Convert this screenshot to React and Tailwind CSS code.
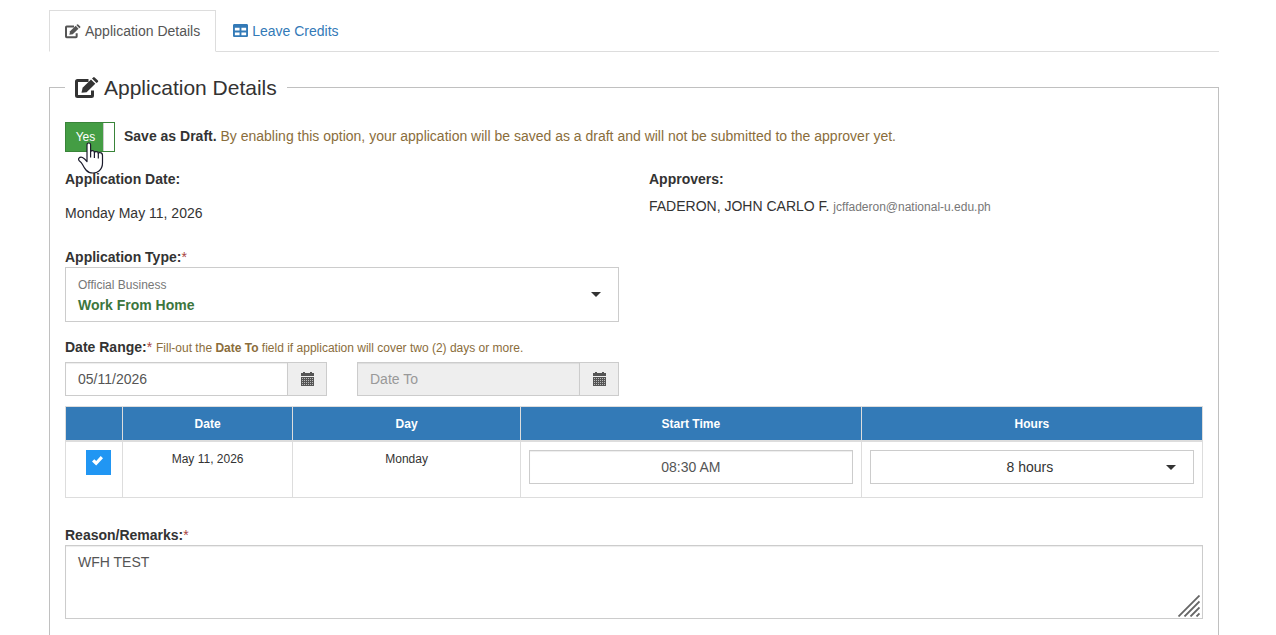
import { useState } from 'react';
import { FaTable } from 'react-icons/fa';

const rows = [{ id: 1, date: 'May 11, 2026', day: 'Monday', start: '08:30 AM', hours: '8' }];

const EditIcon = ({ className }) => (
  <svg viewBox="0 0 24 22" fill="none" className={className} aria-hidden="true">
    <path
      d="M13.500 3.500H2.500Q1.500 3.500 1.500 4.500V18.500Q1.500 19.500 2.500 19.500H16.500Q17.500 19.500 17.500 18.500V13.500"
      stroke="currentColor"
      strokeWidth="3"
    />
    <path d="M6.500 15.800L7.600 10.800L16 2.400L20.300 6.700L11.600 15.200Z" fill="currentColor" />
    <path d="M17 1.400L18.200 0.400Q18.900 -0.200 19.700 0.500L22.900 3.600Q23.500 4.300 22.900 5L21.500 6Z" fill="currentColor" />
  </svg>
);

const CalendarIcon = () => (
  <svg width="13" height="14" viewBox="0 0 13 14" shapeRendering="crispEdges" aria-hidden="true">
    <path d="M2 0h2v1h5V0h2v1h2v3H0V1h2zM0 5h13v9H0z" fill="#555" />
    <path
      d="M1 6.500h11M1 8.500h11M1 10.500h11M1 12.500h11"
      stroke="#bbb"
      strokeWidth="1"
      strokeDasharray="1 1"
    />
  </svg>
);

const Caret = () => (
  <svg width="10" height="5" viewBox="0 0 10 5" fill="#333" aria-hidden="true">
    <path d="M0 0h10L5 5z" />
  </svg>
);

const HandCursor = () => (
  <svg width="26" height="32" viewBox="0 0 26 32" aria-hidden="true">
    <path
      d="M9 19V2.800Q9 1 10.800 1Q12.600 1 12.600 2.800V9.500Q13 8.500 14.600 8.700Q16.300 9 16.400 10.300Q17 9.400 18.500 9.700Q20.200 10 20.300 11.200Q21 10.400 22.300 10.700Q24.500 11 24.500 13.500V21Q24.500 26 21 29Q18.800 31 15 31Q10.500 31 8 28Q6 25.500 4.500 22.500Q3.500 20.500 1.500 19Q0 17.500 1 16.200Q2.300 14.600 4.500 15.500Q6.500 16.500 9 19.500Z"
      fill="#fff"
      stroke="#1b1b2b"
      strokeWidth="1.200"
      strokeLinejoin="round"
    />
    <path d="M12.600 9v6.500M16.400 10v6M20.300 11v5.500" stroke="#1b1b2b" strokeWidth="1.200" fill="none" />
  </svg>
);

const DateField = ({ id, label, ...props }) => (
  <div className="flex h-[34px] border border-[#ccc]">
    <input
      id={id}
      type="text"
      aria-label={label}
      className="min-w-0 flex-1 px-3 text-[#555] placeholder-[#999] shadow-[inset_0_1px_1px_rgba(0,0,0,0.075)] outline-none disabled:bg-[#eee]"
      {...props}
    />
    <button
      type="button"
      aria-label={`Open calendar for ${label}`}
      className="flex w-[39px] items-center justify-center border-l border-[#ccc] bg-[#eee]"
    >
      <CalendarIcon />
    </button>
  </div>
);

const Required = () => <span className="font-normal text-[#a94442]">*</span>;

export default function App() {
  const [draft, setDraft] = useState(true);
  const [type, setType] = useState('Work From Home');
  const [dateFrom, setDateFrom] = useState('05/11/2026');
  const [remarks, setRemarks] = useState('WFH TEST');

  return (
    <div className="bg-white pr-2 font-['Liberation_Sans',Arial,sans-serif] text-sm leading-5 text-[#333]">
      <main className="mx-auto max-w-[1170px] pt-2.5 pb-10">
        <nav className="flex border-b border-[#ddd]">
          <a
            href="#details"
            className="-mb-px flex items-center gap-1 border border-[#ddd] border-b-white bg-white px-[15px] py-2.5 text-[#555]"
          >
            <EditIcon className="h-[15px] w-4" />
            Application Details
          </a>
          <a href="#credits" className="flex items-center gap-1 px-[17px] py-2.5 text-[#337ab7]">
            <FaTable size={15} />
            Leave Credits
          </a>
        </nav>

        <fieldset className="mt-[19px] border border-[#c0c0c0] px-[15px] pb-10">
          <legend className="flex items-center gap-[5px] px-2.5 pt-0.5 text-[21px] leading-[30px]">
            <EditIcon className="h-[22px] w-6" />
            Application Details
          </legend>

          <div className="mt-[19px] flex items-center">
            <label className="relative flex h-[30px] w-[50px] cursor-pointer border border-[#398439] bg-white text-xs text-white">
              <input
                type="checkbox"
                aria-label="Save as Draft"
                checked={draft}
                onChange={(e) => setDraft(e.target.checked)}
                className="sr-only"
              />
              <span className="flex w-[38px] items-center justify-center border-r border-[#ccc] bg-[#449d44] pl-0.5">
                {draft ? 'Yes' : 'No'}
              </span>
              <span className="pointer-events-none absolute top-[19px] left-3 z-10">
                <HandCursor />
              </span>
            </label>
            <p className="pb-0.5 pl-[9px] text-[#8a6d3b]">
              <b className="text-[#333]">Save as Draft.</b> By enabling this option, your application will be saved as
              a draft and will not be submitted to the approver yet.
            </p>
          </div>

          <div className="mt-[17px] grid grid-cols-2 gap-[30px]">
            <div>
              <h4 className="font-bold">Application Date:</h4>
              <p className="mt-3.5">Monday May 11, 2026</p>
            </div>
            <div>
              <h4 className="font-bold">Approvers:</h4>
              <p className="mt-[7px]">
                FADERON, JOHN CARLO F. <span className="text-xs text-[#777]">jcffaderon@national-u.edu.ph</span>
              </p>
            </div>
          </div>

          <div className="mt-6 grid grid-cols-2 gap-[30px]">
            <div>
              <label htmlFor="type" className="block font-bold">
                Application Type:
                <Required />
              </label>
              <div className="relative flex h-[55px] items-center justify-between border border-[#ccc] pr-[17px] pl-3">
                <div>
                  <span className="block text-xs leading-5 text-[#777]">Official Business</span>
                  <b className="block text-[#3c763d]">{type}</b>
                </div>
                <Caret />
                <select
                  id="type"
                  value={type}
                  onChange={(e) => setType(e.target.value)}
                  className="absolute inset-0 w-full cursor-pointer opacity-0"
                >
                  <option>Work From Home</option>
                </select>
              </div>

              <div className="mt-[15px]">
                <label htmlFor="date-from" className="font-bold">
                  Date Range:
                  <Required />
                </label>{' '}
                <span className="text-xs text-[#8a6d3b]">
                  Fill-out the <b>Date To</b> field if application will cover two (2) days or more.
                </span>
              </div>
              <div className="mt-[5px] grid grid-cols-2 gap-[30px]">
                <DateField
                  id="date-from"
                  label="Date From"
                  value={dateFrom}
                  onChange={(e) => setDateFrom(e.target.value)}
                />
                <DateField id="date-to" label="Date To" placeholder="Date To" disabled />
              </div>
            </div>
          </div>

          <table className="mt-2.5 w-full table-fixed border-collapse border border-[#ddd] text-center text-xs leading-[17px]">
            <thead>
              <tr className="bg-[#337ab7] text-white">
                <th className="w-[5%] border border-b-2 border-[#ddd] px-2 pt-[9px] pb-[7px]" aria-label="Include"></th>
                <th className="w-[15%] border border-b-2 border-[#ddd] px-2 pt-[9px] pb-[7px]">Date</th>
                <th className="w-[20%] border border-b-2 border-[#ddd] px-2 pt-[9px] pb-[7px]">Day</th>
                <th className="w-[30%] border border-b-2 border-[#ddd] px-2 pt-[9px] pb-[7px]">Start Time</th>
                <th className="w-[30%] border border-b-2 border-[#ddd] px-2 pt-[9px] pb-[7px]">Hours</th>
              </tr>
            </thead>
            <tbody>
              {rows.map((row) => (
                <tr key={row.id} className="align-top">
                  <td className="border border-[#ddd] pt-2 pl-5">
                    <label className="grid size-[25px]">
                      <input
                        type="checkbox"
                        defaultChecked
                        aria-label={`Include ${row.date}`}
                        className="peer col-start-1 row-start-1 size-[25px] appearance-none bg-[#eee] checked:bg-[#2196f3]"
                      />
                      <svg
                        viewBox="0 0 12 12"
                        className="pointer-events-none invisible col-start-1 row-start-1 mt-[5px] ml-1.5 size-3 peer-checked:visible"
                        aria-hidden="true"
                      >
                        <path d="M0 6.500L2.300 4.200L4.200 6.100L8.700 1L11 3.300L4.200 10.500Z" fill="#fff" />
                      </svg>
                    </label>
                  </td>
                  <td className="border border-[#ddd] px-2 pt-[9px]">{row.date}</td>
                  <td className="border border-[#ddd] px-2 pt-[9px]">{row.day}</td>
                  <td className="border border-[#ddd] px-2 pt-2 pb-[13px]">
                    <input
                      type="text"
                      aria-label="Start Time"
                      defaultValue={row.start}
                      className="block h-[34px] w-full border border-[#ccc] px-3 text-center text-sm text-[#555] shadow-[inset_0_1px_1px_rgba(0,0,0,0.075)] outline-none"
                    />
                  </td>
                  <td className="border border-[#ddd] px-2 pt-2 pb-[13px]">
                    <div className="relative">
                      <select
                        aria-label="Hours"
                        defaultValue={row.hours}
                        className="block h-[34px] w-full appearance-none border border-[#ccc] bg-white pr-4 pl-3 text-center text-sm text-[#333] outline-none"
                      >
                        <option value="8">8 hours</option>
                        <option value="4">4 hours</option>
                      </select>
                      <span className="pointer-events-none absolute inset-y-0 right-[18px] flex items-center">
                        <Caret />
                      </span>
                    </div>
                  </td>
                </tr>
              ))}
            </tbody>
          </table>

          <label htmlFor="remarks" className="mt-[27px] block font-bold">
            Reason/Remarks:
            <Required />
          </label>
          <div className="relative">
            <textarea
              id="remarks"
              value={remarks}
              onChange={(e) => setRemarks(e.target.value)}
              className="block h-[74px] w-full resize-none border border-[#ccc] px-3 py-1.5 text-[#555] shadow-[inset_0_1px_1px_rgba(0,0,0,0.075)] outline-none"
            />
            <svg
              width="22"
              height="22"
              viewBox="0 0 22 22"
              className="pointer-events-none absolute right-[3px] bottom-0.5"
              aria-hidden="true"
            >
              <path
                d="M0.500 21.500L21.500 0.500M6.500 21.500L21.500 6.500M12.500 21.500L21.500 12.500M18.500 21.500L21.500 18.500"
                stroke="#666"
                strokeWidth="1.800"
              />
            </svg>
          </div>
        </fieldset>
      </main>
    </div>
  );
}
